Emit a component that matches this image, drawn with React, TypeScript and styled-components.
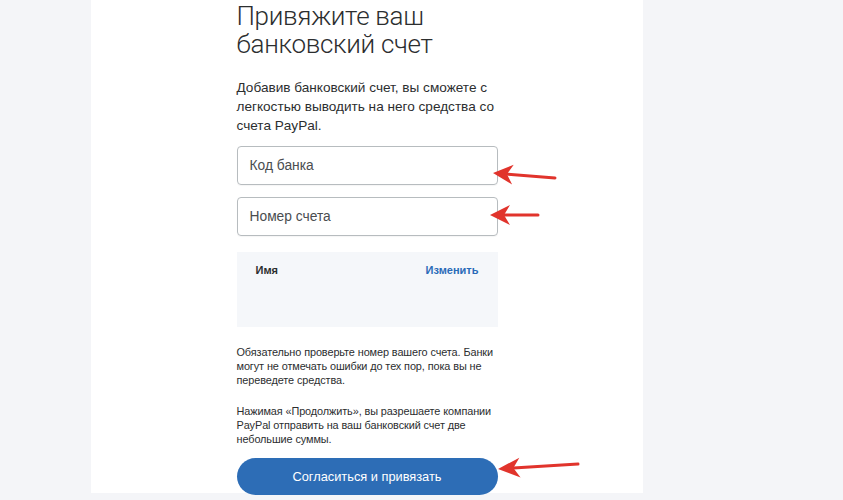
import React from "react";
import styled, { createGlobalStyle } from "styled-components";

const Global = createGlobalStyle`
  html, body { margin: 0; padding: 0; }
  body {
    background: #f4f5f8;
    font-family: "Liberation Sans", Arial, sans-serif;
    color: #2c2e2f;
  }
`;

const Page = styled.div`
  position: relative;
  width: 843px;
  height: 500px;
  overflow: hidden;
`;

const Panel = styled.div`
  margin-left: 91px;
  width: 552px;
  height: 493px;
  background: #ffffff;
`;

const Column = styled.div`
  width: 261px;
  margin: 0 auto;
  padding-top: 2px;
  display: flex;
  flex-direction: column;
`;

const Title = styled.h1`
  margin: 0;
  font-family: "Roboto", "Liberation Sans", sans-serif;
  font-weight: 300;
  font-size: 26px;
  line-height: 28px;
  color: #2c2e2f;
  letter-spacing: -0.3px;
`;

const Lead = styled.p`
  margin: 20px 0 0;
  font-size: 13.6px;
  line-height: 19px;
  color: #2c2e2f;
  white-space: nowrap;
`;

const Field = styled.div<{ $top: number }>`
  margin-top: ${(p) => p.$top}px;
  height: 39px;
  box-sizing: border-box;
  border: 1px solid #b7bcbf;
  border-radius: 4px;
  display: flex;
  align-items: center;
  padding-left: 12px;
  font-size: 13.8px;
  color: #4a4d50;
  box-shadow: 0 1px 1px rgba(0, 0, 0, 0.04);
`;

const NameCard = styled.div`
  margin-top: 16px;
  height: 75px;
  box-sizing: border-box;
  background: #f5f7fa;
  padding: 11px 19px 0 19px;
  display: flex;
  justify-content: space-between;
  align-items: flex-start;
  font-size: 11px;
  line-height: 14px;
  font-weight: 700;
`;

const NameLabel = styled.span`
  color: #2c2e2f;
`;

const EditLink = styled.span`
  color: #2a6bb8;
`;

const Note = styled.p<{ $top: number }>`
  margin: ${(p) => p.$top}px 0 0;
  font-size: 10.9px;
  line-height: 14px;
  letter-spacing: -0.1px;
  color: #2c2e2f;
  white-space: nowrap;
`;

const Button = styled.button`
  margin-top: 12px;
  height: 37px;
  width: 100%;
  border: none;
  border-radius: 19px;
  background: #2d6db6;
  color: #ffffff;
  font-family: "Liberation Sans", Arial, sans-serif;
  font-size: 12.8px;
  padding: 0;
`;

const Arrows = styled.svg`
  position: absolute;
  left: 0;
  top: 0;
  pointer-events: none;
`;

function Arrow({ tip, tail, back, half }: { tip: [number, number]; tail: [number, number]; back: number; half: number }) {
  const [tx, ty] = tip;
  const [ex, ey] = tail;
  const dx = ex - tx;
  const dy = ey - ty;
  const len = Math.hypot(dx, dy);
  const ux = dx / len;
  const uy = dy / len;
  const bx = tx + ux * back;
  const by = ty + uy * back;
  const nx = -uy;
  const ny = ux;
  const notchX = tx + ux * back * 0.7;
  const notchY = ty + uy * back * 0.7;
  const pts = [
    [tx, ty],
    [bx + nx * half, by + ny * half],
    [notchX, notchY],
    [bx - nx * half, by - ny * half],
  ]
    .map((p) => p.join(","))
    .join(" ");
  return (
    <g>
      <line x1={notchX} y1={notchY} x2={ex} y2={ey} stroke="#e1342c" strokeWidth={3} strokeLinecap="round" />
      <polygon points={pts} fill="#e1342c" />
    </g>
  );
}

export default function App() {
  return (
    <Page>
      <Global />
      <Panel>
        <Column>
          <Title>
            Привяжите ваш
            <br />
            банковский счет
          </Title>
          <Lead>
            Добавив банковский счет, вы сможете с
            <br />
            легкостью выводить на него средства со
            <br />
            счета PayPal.
          </Lead>
          <Field $top={11}>Код банка</Field>
          <Field $top={12}>Номер счета</Field>
          <NameCard>
            <NameLabel>Имя</NameLabel>
            <EditLink>Изменить</EditLink>
          </NameCard>
          <Note $top={18}>
            Обязательно проверьте номер вашего счета. Банки
            <br />
            могут не отмечать ошибки до тех пор, пока вы не
            <br />
            переведете средства.
          </Note>
          <Note $top={17}>
            Нажимая «Продолжить», вы разрешаете компании
            <br />
            PayPal отправить на ваш банковский счет две
            <br />
            небольшие суммы.
          </Note>
          <Button>Согласиться и привязать</Button>
        </Column>
      </Panel>
      <Arrows width={843} height={500} viewBox="0 0 843 500">
        <Arrow tip={[493, 173]} tail={[555, 178]} back={20} half={10} />
        <Arrow tip={[490, 215]} tail={[538, 215]} back={20} half={10} />
        <Arrow tip={[498, 469]} tail={[578, 464]} back={22} half={10} />
      </Arrows>
    </Page>
  );
}
